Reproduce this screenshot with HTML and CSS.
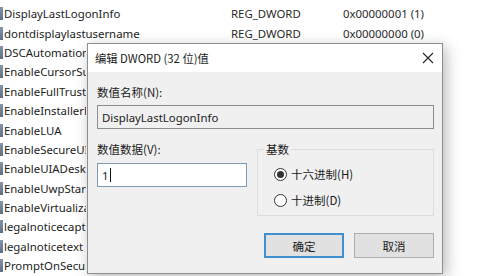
FILE: index.html
```html
<!DOCTYPE html>
<html lang="zh-CN">
<head>
<meta charset="utf-8">
<title>编辑 DWORD (32 位)值</title>
<link rel="stylesheet" href="styles.css">
</head>
<body>
<div class="list">
  <div class="row"><span class="ico"></span><span class="name">DisplayLastLogonInfo</span><span class="type">REG_DWORD</span><span class="data">0x00000001 (1)</span></div>
  <div class="row"><span class="ico"></span><span class="name">dontdisplaylastusername</span><span class="type">REG_DWORD</span><span class="data">0x00000000 (0)</span></div>
  <div class="row under"><span class="ico"></span><span class="name">DSCAutomationHostEnabled</span></div>
  <div class="row under"><span class="ico"></span><span class="name">EnableCursorSuppression</span></div>
  <div class="row under"><span class="ico"></span><span class="name">EnableFullTrustStartupTasks</span></div>
  <div class="row under"><span class="ico"></span><span class="name">EnableInstallerDetection</span></div>
  <div class="row under"><span class="ico"></span><span class="name">EnableLUA</span></div>
  <div class="row under"><span class="ico"></span><span class="name">EnableSecureUIAPaths</span></div>
  <div class="row under"><span class="ico"></span><span class="name">EnableUIADesktopToggle</span></div>
  <div class="row under"><span class="ico"></span><span class="name">EnableUwpStartupTasks</span></div>
  <div class="row under"><span class="ico"></span><span class="name">EnableVirtualization</span></div>
  <div class="row under"><span class="ico"></span><span class="name">legalnoticecaption</span></div>
  <div class="row under"><span class="ico"></span><span class="name">legalnoticetext</span></div>
  <div class="row under"><span class="ico"></span><span class="name">PromptOnSecureDesktop</span></div>
</div>

<div class="dialog">
  <div class="titlebar">
    <span class="title">编辑 DWORD (32 位)值</span>
    <svg class="close" width="12" height="12" viewBox="0 0 12 12"><path d="M1 1 L11 11 M11 1 L1 11" stroke="#222" stroke-width="1.1" fill="none"/></svg>
  </div>
  <div class="body">
    <div class="label">数值名称(N):</div>
    <div class="field readonly">DisplayLastLogonInfo</div>
    <div class="cols">
      <div class="col-left">
        <div class="label">数值数据(V):</div>
        <div class="field input">1<span class="caret"></span></div>
      </div>
      <div class="group">
        <span class="legend">基数</span>
        <div class="radio"><span class="dot checked"></span><span>十六进制(H)</span></div>
        <div class="radio"><span class="dot"></span><span>十进制(D)</span></div>
      </div>
    </div>
    <div class="buttons">
      <div class="btn default">确定</div>
      <div class="btn">取消</div>
    </div>
  </div>
</div>
</body>
</html>
```

FILE: styles.css
```css
html, body {
  margin: 0;
  padding: 0;
  background: #ffffff;
  width: 500px;
  height: 276px;
  overflow: hidden;
  font-family: "Noto Sans", "Noto Sans CJK SC", sans-serif;
}

.list {
  display: flex;
  flex-direction: column;
  padding-top: 4px;
}

.row {
  display: grid;
  grid-template-columns: 4px 227px 112px 1fr;
  height: 19.4px;
  align-items: center;
  font-size: 11.4px;
  color: #1c1c1c;
  white-space: nowrap;
}

.row.under {
  grid-template-columns: 4px 82px;
}

.ico {
  width: 3px;
  height: 13px;
  background: linear-gradient(#8696aa, #5c6f86);
}

.name { overflow: hidden; }
.type, .data { color: #2a2a2a; }

.dialog {
  position: absolute;
  left: 87px;
  top: 43px;
  width: 354px;
  height: 229px;
  border: 1px solid #8a8f95;
  background: #f0f0f0;
  box-shadow: 3px 4px 14px rgba(0, 0, 0, 0.28);
  display: flex;
  flex-direction: column;
  font-family: "Noto Sans CJK SC", sans-serif;
  font-size: 11.5px;
  color: #1a1a1a;
}

.titlebar {
  height: 28px;
  background: #ffffff;
  display: flex;
  align-items: center;
  justify-content: space-between;
  padding: 0 8px 0 7px;
}

.title { font-size: 11.3px; }

.body {
  display: flex;
  flex-direction: column;
  padding: 12px 8px 0 9px;
}

.label {
  height: 16px;
  line-height: 16px;
}

.field {
  box-sizing: border-box;
  display: flex;
  align-items: center;
  font-family: "Noto Sans", sans-serif;
  font-size: 11.4px;
  padding-left: 4px;
}

.readonly {
  margin-top: 5px;
  height: 24px;
  border: 1px solid #8c8c8c;
  background: #f0f0f0;
}

.cols {
  display: flex;
  gap: 10px;
  margin-top: 12px;
}

.col-left {
  width: 150px;
  display: flex;
  flex-direction: column;
}

.input {
  margin-top: 6px;
  height: 24px;
  border: 1px solid #7f9ab5;
  background: #ffffff;
}

.caret {
  display: inline-block;
  width: 1px;
  height: 14px;
  background: #111;
  margin-left: 1px;
}

.group {
  position: relative;
  flex: 1;
  box-sizing: border-box;
  height: 67px;
  margin-top: 8px;
  border: 1px solid #dcdcdc;
  display: flex;
  flex-direction: column;
  padding: 14px 0 0 16px;
  gap: 6px;
}

.legend {
  position: absolute;
  top: -9px;
  left: 6px;
  padding: 0 2px;
  background: #f0f0f0;
  line-height: 16px;
}

.radio {
  display: flex;
  align-items: center;
  gap: 4px;
  height: 20px;
}

.dot {
  box-sizing: border-box;
  width: 13px;
  height: 13px;
  border: 1px solid #333;
  border-radius: 50%;
  background: #fff;
  display: flex;
  align-items: center;
  justify-content: center;
}

.dot.checked::after {
  content: "";
  width: 7px;
  height: 7px;
  border-radius: 50%;
  background: #333;
}

.buttons {
  display: flex;
  justify-content: flex-end;
  gap: 10px;
  margin-top: 17px;
}

.btn {
  box-sizing: border-box;
  width: 80px;
  height: 25px;
  border: 1px solid #adadad;
  background: #e1e1e1;
  display: flex;
  align-items: center;
  justify-content: center;
}

.btn.default {
  border: 2px solid #3f8fcf;
}
```
